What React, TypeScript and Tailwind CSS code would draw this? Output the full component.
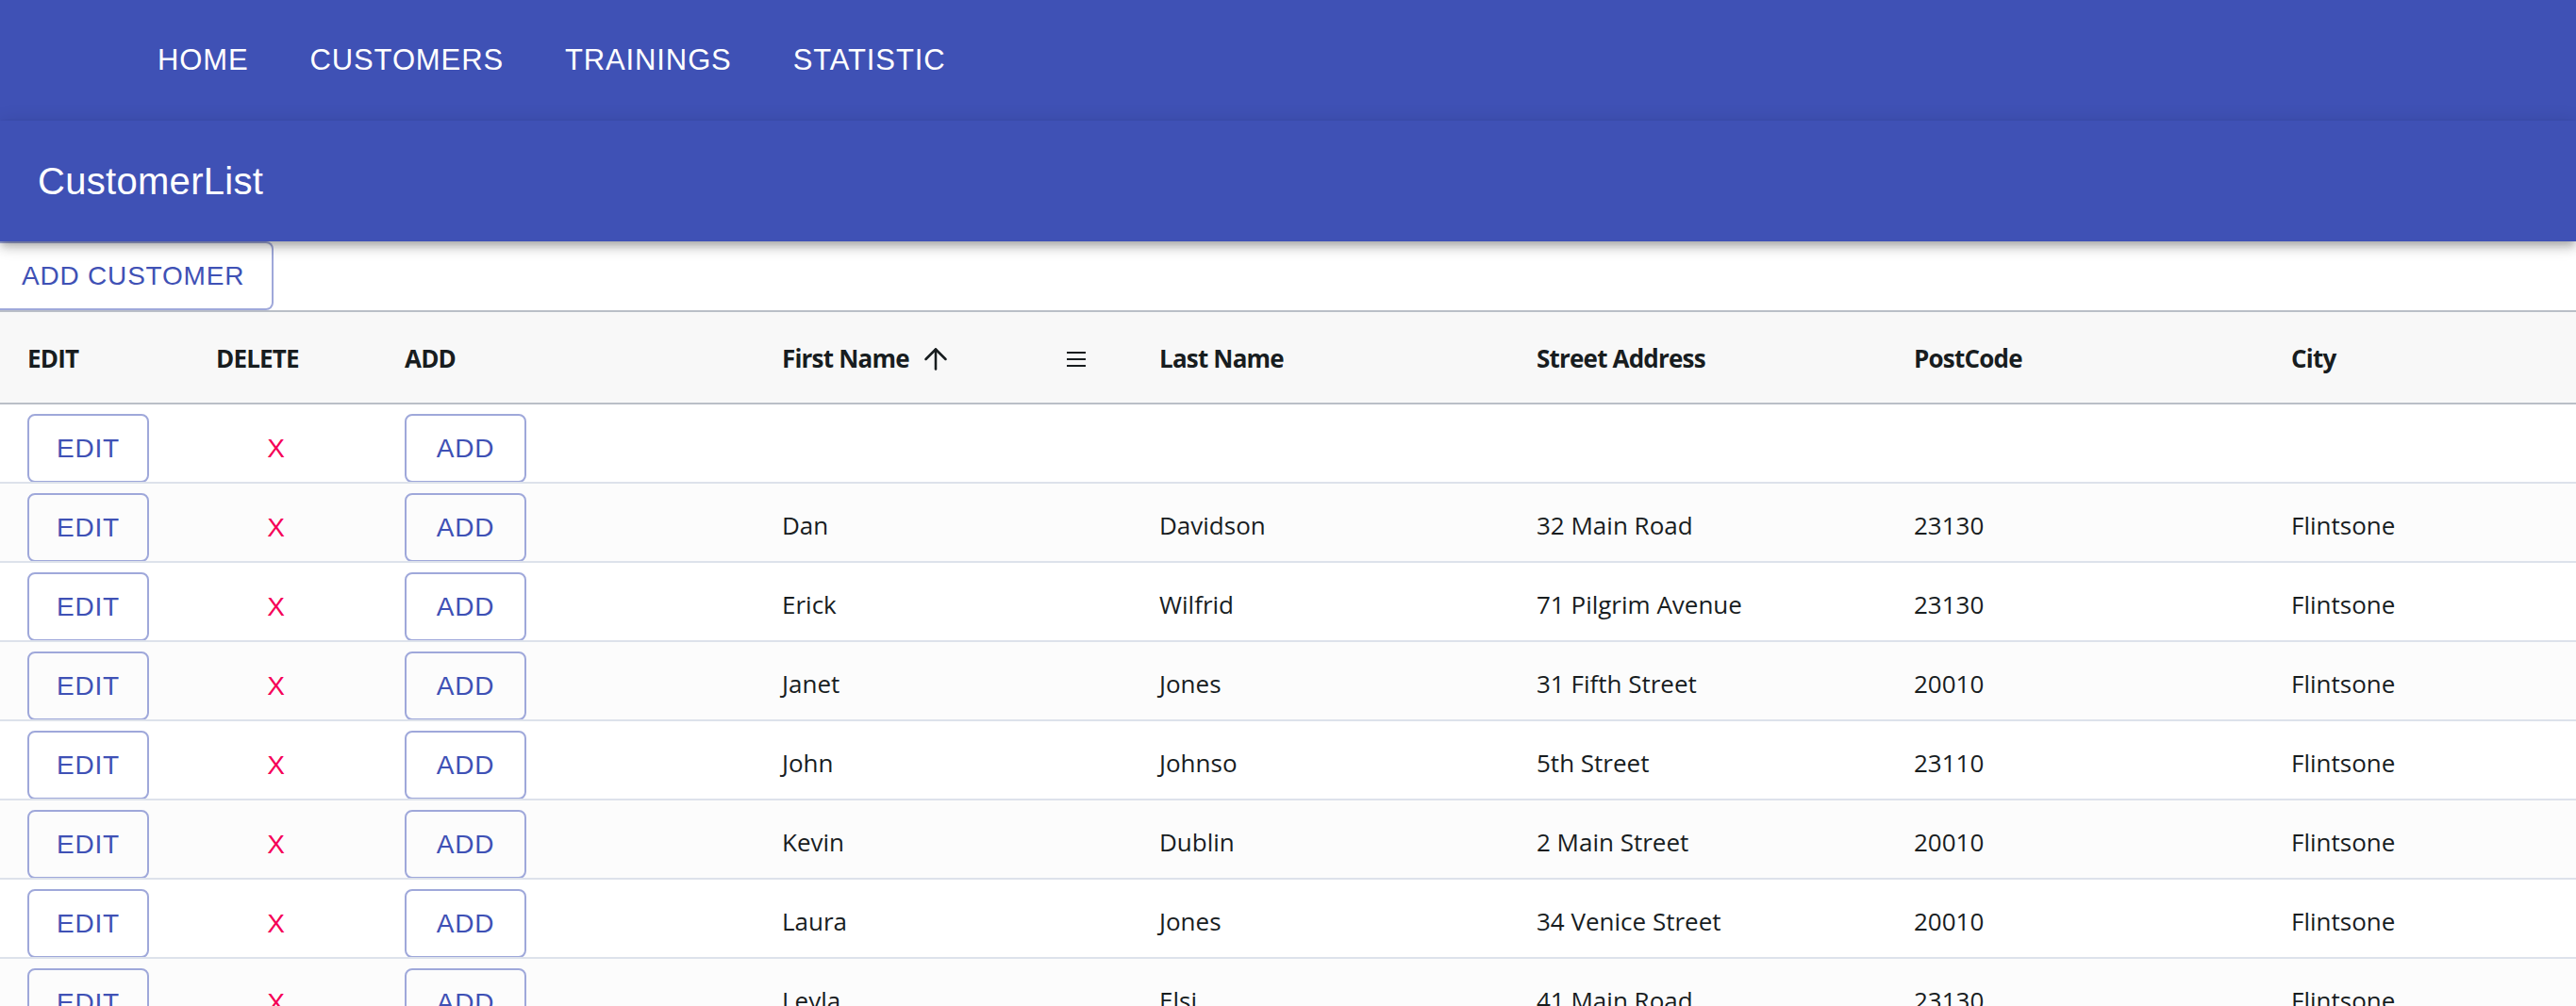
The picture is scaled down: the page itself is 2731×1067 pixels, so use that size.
import { ArrowUp } from "lucide-react";

const navItems = ["HOME", "CUSTOMERS", "TRAININGS", "STATISTIC"];

const customers = [
  { first: "", last: "", street: "", post: "", city: "" },
  { first: "Dan", last: "Davidson", street: "32 Main Road", post: "23130", city: "Flintsone" },
  { first: "Erick", last: "Wilfrid", street: "71 Pilgrim Avenue", post: "23130", city: "Flintsone" },
  { first: "Janet", last: "Jones", street: "31 Fifth Street", post: "20010", city: "Flintsone" },
  { first: "John", last: "Johnso", street: "5th Street", post: "23110", city: "Flintsone" },
  { first: "Kevin", last: "Dublin", street: "2 Main Street", post: "20010", city: "Flintsone" },
  { first: "Laura", last: "Jones", street: "34 Venice Street", post: "20010", city: "Flintsone" },
  { first: "Leyla", last: "Elsi", street: "41 Main Road", post: "23130", city: "Flintsone" },
];

function OutlinedButton({ label }: { label: string }) {
  return (
    <button
      type="button"
      className="h-[73px] w-[129px] rounded-[8px] border-2 border-[#9fa8da] font-['Liberation_Sans',Arial,sans-serif] text-[28px] tracking-[0.8px] text-[#3f51b5]"
    >
      {label}
    </button>
  );
}

export default function App() {
  return (
    <div className="h-[1067px] w-full overflow-hidden bg-white">
      {/* top navigation */}
      <nav className="flex h-[128px] items-center gap-[65px] bg-[#3f51b5] pl-[167px] font-['Liberation_Sans',Arial,sans-serif] text-[31px] tracking-[0.88px] text-white">
        {navItems.map((item) => (
          <span key={item}>{item}</span>
        ))}
      </nav>

      {/* page title bar */}
      <header className="relative z-10 flex h-[128px] items-center bg-[#3f51b5] pl-[40px] font-['Liberation_Sans',Arial,sans-serif] text-[40px] tracking-[0.3px] text-white shadow-[0_4px_8px_-2px_rgba(0,0,0,0.2),0_8px_10px_0_rgba(0,0,0,0.14),0_2px_20px_0_rgba(0,0,0,0.12)]">
        CustomerList
      </header>

      <div className="h-[73px]">
        <button
          type="button"
          className="h-[73px] w-[290px] rounded-r-[8px] border-2 border-l-0 border-[#9fa8da] pl-[23px] text-left font-['Liberation_Sans',Arial,sans-serif] text-[28px] tracking-[0.8px] text-[#3f51b5]"
        >
          ADD CUSTOMER
        </button>
      </div>

      {/* grid */}
      <div className="overflow-hidden border-t-2 border-[#babfc7] font-['Open_Sans',sans-serif] text-[26px] text-[#181d1f]">
        <div className="grid h-[98px] w-[2800px] grid-cols-[200px_200px_400px_400px_400px_400px_400px_400px] border-b-2 border-[#babfc7] bg-[#f8f8f8] font-bold tracking-[-0.8px]">
          <div className="flex items-center px-[29px] pt-[3px]">EDIT</div>
          <div className="flex items-center px-[29px] pt-[3px]">DELETE</div>
          <div className="flex items-center px-[29px] pt-[3px]">ADD</div>
          <div className="flex items-center px-[29px] pt-[3px]">
            <span>First Name</span>
            <ArrowUp size={36} strokeWidth={1.7} className="ml-[10px]" />
            <span className="flex-1" />
            <svg width="20" height="16" viewBox="0 0 20 16" className="mr-[20px]">
              <rect x="0" y="0" width="20" height="2" fill="#181d1f" />
              <rect x="0" y="7" width="20" height="2" fill="#181d1f" />
              <rect x="0" y="14" width="20" height="2" fill="#181d1f" />
            </svg>
          </div>
          <div className="flex items-center px-[29px] pt-[3px]">Last Name</div>
          <div className="flex items-center px-[29px] pt-[3px]">Street Address</div>
          <div className="flex items-center px-[29px] pt-[3px]">PostCode</div>
          <div className="flex items-center px-[29px] pt-[3px]">City</div>
        </div>

        {customers.map((c, i) => (
          <div
            key={i}
            className={`grid h-[84px] w-[2800px] grid-cols-[200px_200px_400px_400px_400px_400px_400px_400px] border-b-2 border-[#dde2eb] ${
              i % 2 === 1 ? "bg-[#fcfcfc]" : "bg-white"
            }`}
          >
            <div className="overflow-hidden px-[29px] pt-[10px]">
              <OutlinedButton label="EDIT" />
            </div>
            <div className="overflow-hidden px-[29px] pt-[10px]">
              <button
                type="button"
                className="h-[73px] w-[128px] font-['Liberation_Sans',Arial,sans-serif] text-[28px] tracking-[0.8px] text-[#f50057]"
              >
                X
              </button>
            </div>
            <div className="overflow-hidden px-[29px] pt-[10px]">
              <OutlinedButton label="ADD" />
            </div>
            <div className="flex items-center px-[29px] pt-[6px]">{c.first}</div>
            <div className="flex items-center px-[29px] pt-[6px]">{c.last}</div>
            <div className="flex items-center px-[29px] pt-[6px]">{c.street}</div>
            <div className="flex items-center px-[29px] pt-[6px]">{c.post}</div>
            <div className="flex items-center px-[29px] pt-[6px]">{c.city}</div>
          </div>
        ))}
      </div>
    </div>
  );
}
